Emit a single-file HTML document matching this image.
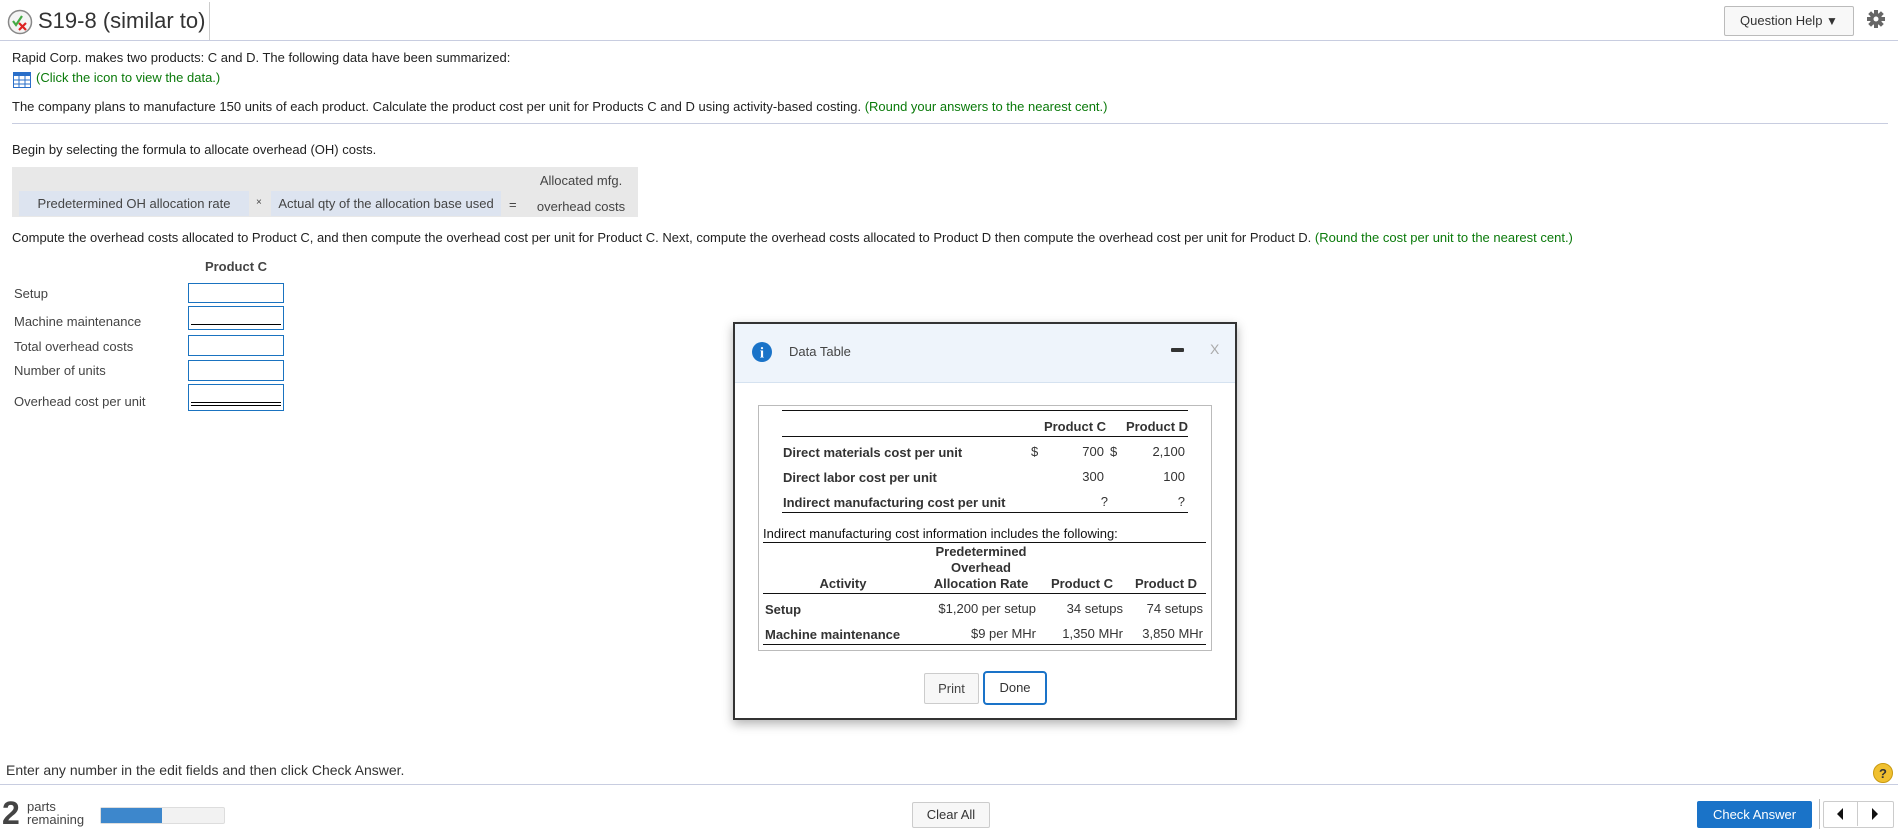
<!DOCTYPE html>
<html><head><meta charset="utf-8"><style>
body{margin:0;width:1898px;height:837px;position:relative;overflow:hidden;background:#fff;font-family:"Liberation Sans",Arial,sans-serif;color:#222;font-size:13px}
.a{position:absolute;white-space:nowrap}
.g{color:#0a7a0a}
.in{position:absolute;left:188px;width:94px;border:1px solid #1a73c0;background:#fff}
.dl{position:absolute;height:0;border-top:1.5px solid #111}
.t{position:absolute;font-size:13px;white-space:nowrap;color:#333}
.b{font-weight:bold}
.r{text-align:right}
.c{text-align:center}
</style></head><body>
<!-- header -->
<svg class="a" style="left:7px;top:9px" width="26" height="26" viewBox="0 0 26 26"><circle cx="13" cy="13" r="11.5" fill="#f4f4f4" stroke="#888" stroke-width="1.5"/><path d="M6 12 l3 4 l6-9" stroke="#4a4" stroke-width="2.2" fill="none"/><path d="M12 14 l7 7 M19 14 l-7 7" stroke="#d22" stroke-width="2.2"/></svg>
<div class="a" style="left:38px;top:8px;font-size:22px;color:#333">S19-8 (similar to)</div>
<div class="a" style="left:209px;top:2px;width:1px;height:38px;background:#ccc"></div>
<div class="a" style="left:0;top:40px;width:1898px;height:1px;background:#c8cde0"></div>
<div class="a" style="left:1724px;top:6px;width:128px;height:28px;border:1px solid #bbb;border-radius:2px;background:#f8f8f8;font-size:13px;line-height:28px;text-align:center;color:#333">Question Help <span style="font-size:12px">▼</span></div>
<svg class="a" style="left:1866px;top:9px" width="20" height="20" viewBox="0 0 20 20"><g fill="#666"><circle cx="10" cy="10" r="6"/><rect x="8" y="1" width="4" height="18"/><rect x="1" y="8" width="18" height="4"/><rect x="8" y="1" width="4" height="18" transform="rotate(45 10 10)"/><rect x="8" y="1" width="4" height="18" transform="rotate(-45 10 10)"/></g><circle cx="10" cy="10" r="2.5" fill="#fff"/></svg>

<div class="a" style="left:12px;top:50px">Rapid Corp. makes two products: C and D. The following data have been summarized:</div>
<svg class="a" style="left:13px;top:72px" width="18" height="16" viewBox="0 0 18 16"><rect x="0.5" y="0.5" width="17" height="15" fill="#fff" stroke="#2a6fc9"/><rect x="0" y="0" width="18" height="4" fill="#2a6fc9"/><g stroke="#2a6fc9"><path d="M6 4v12M12 4v12M0 8h18M0 12h18"/></g></svg>
<div class="a g" style="left:36px;top:70px">(Click the icon to view the data.)</div>
<div class="a" style="left:12px;top:99px">The company plans to manufacture 150 units of each product. Calculate the product cost per unit for Products C and D using activity-based costing. <span class="g">(Round your answers to the nearest cent.)</span></div>
<div class="a" style="left:12px;top:123px;width:1876px;height:1px;background:#c8cde0"></div>
<div class="a" style="left:12px;top:142px">Begin by selecting the formula to allocate overhead (OH) costs.</div>
<div class="a" style="left:12px;top:167px;width:626px;height:50px;background:#e8e8e8"></div>
<div class="a" style="left:19px;top:191px;width:230px;height:25px;background:#dde4f0;line-height:25px;text-align:center;color:#444">Predetermined OH allocation rate</div>
<div class="a" style="left:256px;top:197px;font-size:10px;color:#444">×</div>
<div class="a" style="left:271px;top:191px;width:230px;height:25px;background:#dde4f0;line-height:25px;text-align:center;color:#444">Actual qty of the allocation base used</div>
<div class="a" style="left:509px;top:197px;color:#444">=</div>
<div class="a c" style="left:526px;top:173px;width:110px;color:#444">Allocated mfg.</div>
<div class="a c" style="left:526px;top:199px;width:110px;color:#444">overhead costs</div>
<div class="a" style="left:12px;top:230px">Compute the overhead costs allocated to Product C, and then compute the overhead cost per unit for Product C. Next, compute the overhead costs allocated to Product D then compute the overhead cost per unit for Product D. <span class="g">(Round the cost per unit to the nearest cent.)</span></div>
<div class="a b c" style="left:188px;top:259px;width:96px;color:#444">Product C</div>
<div class="a" style="left:14px;top:286px;color:#444">Setup</div>
<div class="a" style="left:14px;top:314px;color:#444">Machine maintenance</div>
<div class="a" style="left:14px;top:339px;color:#444">Total overhead costs</div>
<div class="a" style="left:14px;top:363px;color:#444">Number of units</div>
<div class="a" style="left:14px;top:394px;color:#444">Overhead cost per unit</div>
<div class="in" style="top:283px;height:18px"></div>
<div class="in" style="top:306px;height:22px"><div style="position:absolute;left:2px;right:2px;bottom:4px;border-top:1px solid #000"></div></div>
<div class="in" style="top:335px;height:19px"></div>
<div class="in" style="top:360px;height:19px"></div>
<div class="in" style="top:384px;height:25px"><div style="position:absolute;left:2px;right:2px;bottom:4px;height:2px;border-top:1px solid #000;border-bottom:1px solid #000"></div></div>

<!-- dialog -->
<div class="a" style="left:733px;top:322px;width:500px;height:394px;border:2px solid #333;background:#fff;box-shadow:0 4px 10px rgba(0,0,0,.3)">
 <div style="position:absolute;left:0;top:0;width:500px;height:58px;background:#eef4fb;border-bottom:1px solid #d5e2f0"></div>
</div>
<svg class="a" style="left:752px;top:342px" width="20" height="20" viewBox="0 0 20 20"><circle cx="10" cy="10" r="10" fill="#1a73c8"/><text x="10" y="15.5" font-family="Liberation Serif,serif" font-weight="bold" font-size="15" fill="#fff" text-anchor="middle">i</text></svg>
<div class="a" style="left:789px;top:344px;font-size:13px;color:#444">Data Table</div>
<div class="a" style="left:1171px;top:348px;width:13px;height:4px;background:#333;border-radius:1px"></div>
<div class="a" style="left:1210px;top:341px;font-size:14px;color:#aaa">X</div>
<div class="a" style="left:758px;top:405px;width:452px;height:244px;border:1px solid #bbb"></div>
<div class="dl" style="left:782px;top:410px;width:406px"></div>
<div class="t b" style="left:1040px;top:419px;width:70px;text-align:center">Product C</div>
<div class="t b" style="left:1122px;top:419px;width:70px;text-align:center">Product D</div>
<div class="dl" style="left:782px;top:436px;width:406px"></div>
<div class="t b" style="left:783px;top:445px">Direct materials cost per unit</div>
<div class="t" style="left:1031px;top:444px">$</div>
<div class="t r" style="left:1060px;top:444px;width:44px">700</div>
<div class="t" style="left:1110px;top:444px">$</div>
<div class="t r" style="left:1140px;top:444px;width:45px">2,100</div>
<div class="t b" style="left:783px;top:470px">Direct labor cost per unit</div>
<div class="t r" style="left:1060px;top:469px;width:44px">300</div>
<div class="t r" style="left:1140px;top:469px;width:45px">100</div>
<div class="t b" style="left:783px;top:495px">Indirect manufacturing cost per unit</div>
<div class="t r" style="left:1060px;top:494px;width:48px">?</div>
<div class="t r" style="left:1140px;top:494px;width:45px">?</div>
<div class="dl" style="left:782px;top:512px;width:406px"></div>
<div class="t" style="left:763px;top:526px;color:#111">Indirect manufacturing cost information includes the following:</div>
<div class="dl" style="left:763px;top:542px;width:443px"></div>
<div class="t b c" style="left:921px;top:544px;width:120px">Predetermined</div>
<div class="t b c" style="left:921px;top:560px;width:120px">Overhead</div>
<div class="t b c" style="left:921px;top:576px;width:120px">Allocation Rate</div>
<div class="t b c" style="left:803px;top:576px;width:80px">Activity</div>
<div class="t b c" style="left:1042px;top:576px;width:80px">Product C</div>
<div class="t b c" style="left:1126px;top:576px;width:80px">Product D</div>
<div class="dl" style="left:763px;top:593px;width:443px"></div>
<div class="t b" style="left:765px;top:602px">Setup</div>
<div class="t r" style="left:920px;top:601px;width:116px">$1,200 per setup</div>
<div class="t r" style="left:1043px;top:601px;width:80px">34 setups</div>
<div class="t r" style="left:1123px;top:601px;width:80px">74 setups</div>
<div class="t b" style="left:765px;top:627px">Machine maintenance</div>
<div class="t r" style="left:920px;top:626px;width:116px">$9 per MHr</div>
<div class="t r" style="left:1033px;top:626px;width:90px">1,350 MHr</div>
<div class="t r" style="left:1113px;top:626px;width:90px">3,850 MHr</div>
<div class="dl" style="left:763px;top:644px;width:443px"></div>
<div class="a" style="left:924px;top:673px;width:53px;height:29px;border:1px solid #ccc;border-radius:2px;background:#f7f7f7;font-size:13px;line-height:29px;text-align:center;color:#444">Print</div>
<div class="a" style="left:983px;top:671px;width:60px;height:30px;border:2px solid #1a73c8;border-radius:4px;background:#fff;font-size:13px;line-height:30px;text-align:center;color:#333">Done</div>

<!-- footer -->
<div class="a" style="left:6px;top:762px;font-size:14px;color:#333">Enter any number in the edit fields and then click Check Answer.</div>
<svg class="a" style="left:1873px;top:763px" width="20" height="20" viewBox="0 0 20 20"><circle cx="10" cy="10" r="9.5" fill="#f0c030" stroke="#c99a10"/><text x="10" y="15" font-family="Liberation Sans,sans-serif" font-weight="bold" font-size="13" fill="#333" text-anchor="middle">?</text></svg>
<div class="a" style="left:0;top:784px;width:1898px;height:1px;background:#c8cde0"></div>
<div class="a b" style="left:2px;top:795px;font-size:32px;color:#444">2</div>
<div class="a" style="left:27px;top:800px;font-size:13px;line-height:13px;color:#444">parts<br>remaining</div>
<div class="a" style="left:100px;top:807px;width:123px;height:15px;border:1px solid #ddd;background:#f2f2f2;border-radius:2px"><div style="width:61px;height:15px;background:#3d87cc"></div></div>
<div class="a" style="left:912px;top:802px;width:76px;height:24px;border:1px solid #ccc;background:#f7f7f7;border-radius:2px;font-size:13px;line-height:24px;text-align:center;color:#333">Clear All</div>
<div class="a" style="left:1697px;top:801px;width:115px;height:27px;background:#1a73c8;border-radius:2px;font-size:13px;line-height:27px;text-align:center;color:#fff">Check Answer</div>
<div class="a" style="left:1819px;top:799px;width:1px;height:30px;background:#bbb"></div>
<div class="a" style="left:1823px;top:801px;width:69px;height:25px;border:1px solid #ccc;border-radius:2px;background:#fff"></div>
<div class="a" style="left:1857px;top:802px;width:1px;height:24px;background:#ccc"></div>
<svg class="a" style="left:1835px;top:807px" width="10" height="14"><path d="M8 1 L2 7 L8 13Z" fill="#111"/></svg>
<svg class="a" style="left:1870px;top:807px" width="10" height="14"><path d="M2 1 L8 7 L2 13Z" fill="#111"/></svg>
</body></html>
